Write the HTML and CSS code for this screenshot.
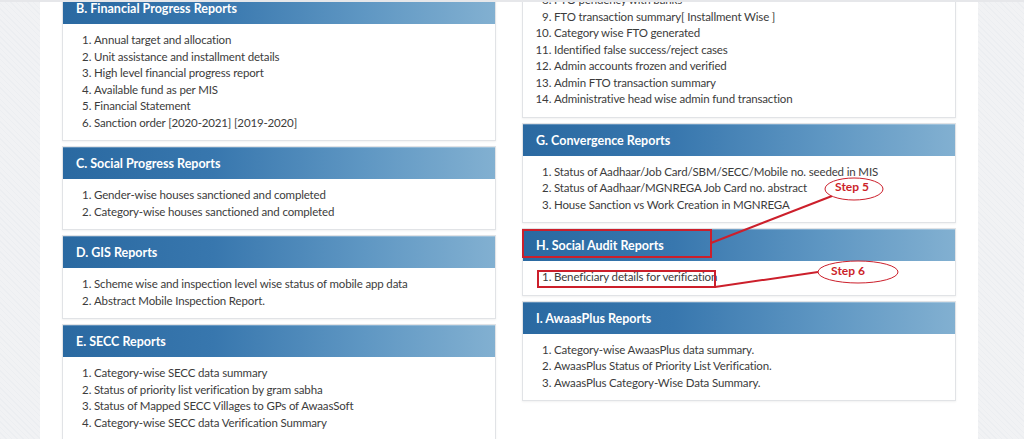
FILE: index.html
```html
<!DOCTYPE html>
<html lang="en">
<head>
    <meta charset="UTF-8">
    <meta name="viewport" content="width=device-width, initial-scale=1.0">
    <title>MIS Reports</title>
    <link rel="stylesheet" href="styles.css">
</head>
<body>

    <div class="page">
        <div class="reports">

            <div class="column">
                <div class="report-box first-left">
                    <div class="report-head">B. Financial Progress Reports</div>
                    <ol class="report-list">
                        <li>Annual target and allocation</li>
                        <li>Unit assistance and installment details</li>
                        <li>High level financial progress report</li>
                        <li>Available fund as per MIS</li>
                        <li>Financial Statement</li>
                        <li>Sanction order [2020-2021] [2019-2020]</li>
                    </ol>
                </div>

                <div class="report-box">
                    <div class="report-head">C. Social Progress Reports</div>
                    <ol class="report-list">
                        <li>Gender-wise houses sanctioned and completed</li>
                        <li>Category-wise houses sanctioned and completed</li>
                    </ol>
                </div>

                <div class="report-box">
                    <div class="report-head">D. GIS Reports</div>
                    <ol class="report-list">
                        <li>Scheme wise and inspection level wise status of mobile app data</li>
                        <li>Abstract Mobile Inspection Report.</li>
                    </ol>
                </div>

                <div class="report-box">
                    <div class="report-head">E. SECC Reports</div>
                    <ol class="report-list">
                        <li>Category-wise SECC data summary</li>
                        <li>Status of priority list verification by gram sabha</li>
                        <li>Status of Mapped SECC Villages to GPs of AwaasSoft</li>
                        <li>Category-wise SECC data Verification Summary</li>
                    </ol>
                </div>
            </div>

            <div class="column">
                <div class="report-box first-right">
                    <ol class="report-list" start="8">
                        <li>FTO pendency with banks</li>
                        <li>FTO transaction summary[ Installment Wise ]</li>
                        <li>Category wise FTO generated</li>
                        <li>Identified false success/reject cases</li>
                        <li>Admin accounts frozen and verified</li>
                        <li>Admin FTO transaction summary</li>
                        <li>Administrative head wise admin fund transaction</li>
                    </ol>
                </div>

                <div class="report-box">
                    <div class="report-head">G. Convergence Reports</div>
                    <ol class="report-list">
                        <li>Status of Aadhaar/Job Card/SBM/SECC/Mobile no. seeded in MIS</li>
                        <li>Status of Aadhaar/MGNREGA Job Card no. abstract</li>
                        <li>House Sanction vs Work Creation in MGNREGA</li>
                    </ol>
                </div>

                <div class="report-box">
                    <div class="report-head">H. Social Audit Reports</div>
                    <ol class="report-list">
                        <li>Beneficiary details for verification</li>
                    </ol>
                </div>

                <div class="report-box">
                    <div class="report-head">I. AwaasPlus Reports</div>
                    <ol class="report-list">
                        <li>Category-wise AwaasPlus data summary.</li>
                        <li>AwaasPlus Status of Priority List Verification.</li>
                        <li>AwaasPlus Category-Wise Data Summary.</li>
                    </ol>
                </div>
            </div>

        </div>
    </div>

    <!-- step markers drawn over the screenshot -->
    <svg class="marks" width="1024" height="439" viewBox="0 0 1024 439">
        <g fill="none" stroke="#cc1f2b" stroke-width="2">
            <rect x="523" y="230" width="188" height="27" />
            <rect x="538" y="271" width="177" height="16" />
            <line x1="711" y1="243" x2="832" y2="196" />
            <line x1="715" y1="287" x2="818" y2="272" />
        </g>
        <g fill="#fff" stroke="#cc1f2b" stroke-width="1">
            <ellipse cx="854" cy="189" rx="29" ry="11" />
            <ellipse cx="858" cy="272" rx="40" ry="11" />
        </g>
        <g class="step-text">
            <text x="852" y="191" text-anchor="middle">Step 5</text>
            <text x="848" y="275" text-anchor="middle">Step 6</text>
        </g>
    </svg>

</body>
</html>
```

FILE: styles.css
```css
body {
    margin: 0;
    height: 439px;
    overflow: hidden;
    font-family: Lato, "Open Sans", sans-serif;
    color: #3c3c3c;
    background-color: #f1f2f4;
    background-image: repeating-linear-gradient(45deg, #eceef1 0, #eceef1 1px, transparent 1px, transparent 4px);
    position: relative;
}

body:before {
    content: '';
    position: absolute;
    top: 0;
    left: 0;
    right: 0;
    height: 2px;
    background: #e6e7ea;
    z-index: 2;
}

.page {
    width: 938px;
    height: 439px;
    margin-left: 40px;
    background: #fff;
}

.reports {
    display: grid;
    grid-template-columns: 434px 434px;
    column-gap: 26px;
    padding: 0 22px;
}

.report-box {
    border: 1px solid #e1e3e6;
    background: #fff;
    box-shadow: 0 1px 2px rgba(0, 0, 0, 0.06);
    margin-bottom: 5px;
}

.first-left {
    margin-top: -9px;
}

.first-right {
    margin-top: -17px;
}

.report-head {
    height: 32px;
    line-height: 33px;
    padding-left: 13px;
    font-size: 12.5px;
    font-weight: bold;
    color: #fff;
    background: linear-gradient(to right, #2a69a1 0%, #3877ae 35%, #5f97c3 70%, #82b0d1 100%);
    box-shadow: inset 0 1px 0 rgba(255, 255, 255, 0.25);
}

.report-list {
    margin: 0;
    padding: 8px 0 9px 31px;
    font-size: 11.5px;
    letter-spacing: -0.15px;
    line-height: 16.5px;
}

.marks {
    position: absolute;
    top: 0;
    left: 0;
    z-index: 3;
}

.step-text {
    font-family: Lato, "Liberation Sans", sans-serif;
    font-size: 12px;
    font-weight: bold;
    fill: #cc1f2b;
}
```
